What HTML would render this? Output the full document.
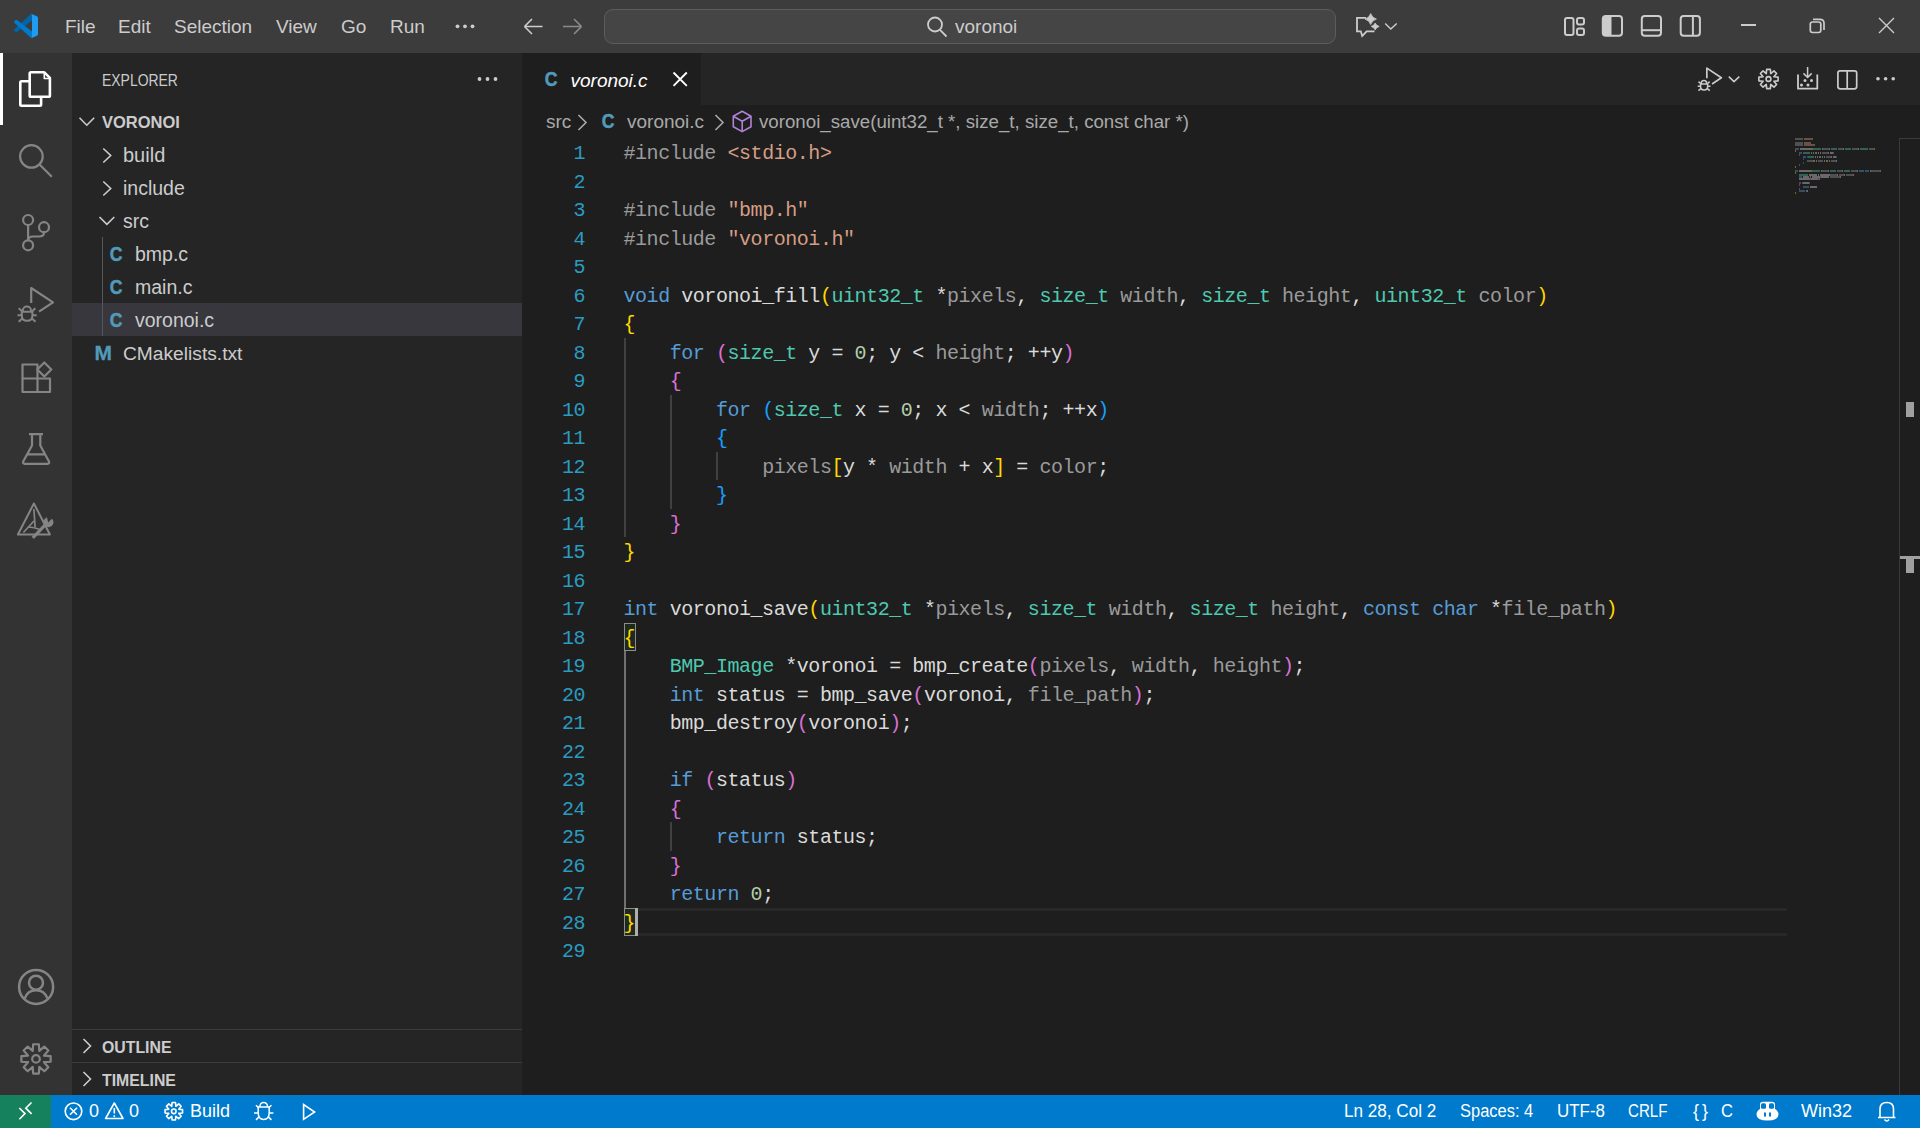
<!DOCTYPE html>
<html><head><meta charset="utf-8">
<style>
*{margin:0;padding:0;box-sizing:border-box}
html,body{width:1920px;height:1128px;overflow:hidden}
body{background:#1e1e1e;font-family:"Liberation Sans",sans-serif;position:relative;color:#cccccc}
.a{position:absolute}
svg{display:block}
/* title bar */
#title{left:0;top:0;width:1920px;height:53px;background:#3c3c3c}
.menu{top:0;height:53.5px;line-height:53.5px;font-size:19px;color:#cccccc;white-space:nowrap}
#search{left:604px;top:9px;width:732px;height:35px;background:#454545;border:1px solid #5d5d5d;border-radius:9px}
/* activity bar */
#act{left:0;top:53px;width:72px;height:1042px;background:#333333}
/* sidebar */
#side{left:72px;top:53px;width:450px;height:1042px;background:#252526}
.tr{height:33px;line-height:33px;font-size:19.5px;color:#cccccc;white-space:nowrap}
/* tabs */
#tabs{left:522px;top:53px;width:1398px;height:52px;background:#252526}
#tab{left:522px;top:53px;width:179px;height:52px;background:#1e1e1e}
/* code */
.cl{position:absolute;left:623.5px;height:28.5px;line-height:28.5px;font-family:"Liberation Mono",monospace;font-size:20px;letter-spacing:-0.45px;white-space:pre;color:#dadada}
.ln{position:absolute;left:540px;width:45px;text-align:right;height:28.5px;line-height:28.5px;font-family:"Liberation Mono",monospace;font-size:20px;letter-spacing:-0.45px;color:#2b9bc0}
.k{color:#569cd6}.t{color:#4ec9b0}.p{color:#9a9a9a}.s{color:#d69d85}.pp{color:#9b9b9b}.n{color:#b5cea8}.w{color:#dadada}
.b1{color:#ffd700}.b2{color:#da70d6}.b3{color:#179fff}
/* status */
#status{left:0;top:1095px;width:1920px;height:33px;background:#007acc}
#remote{left:0;top:1095px;width:51px;height:33px;background:#16825d}
.st{top:1095px;height:33px;line-height:33px;font-size:18px;color:#ffffff;white-space:nowrap}
.ci{height:33px;line-height:33px;font-size:20px;font-weight:bold;color:#519aba;-webkit-text-stroke:0.5px #519aba;transform:scaleX(0.88);transform-origin:50% 0}
</style></head><body>
<div id="title" class="a"></div>
<div id="act" class="a"></div>
<div id="side" class="a"></div>
<div id="tabs" class="a"></div>
<div id="tab" class="a"></div>
<div id="status" class="a"></div>
<div id="remote" class="a"></div>

<!-- TITLE -->
<div class="a menu" style="left:65px">File</div>
<div class="a menu" style="left:118px">Edit</div>
<div class="a menu" style="left:174px">Selection</div>
<div class="a menu" style="left:276px">View</div>
<div class="a menu" style="left:341px">Go</div>
<div class="a menu" style="left:390px">Run</div>
<div id="search" class="a"></div>
<div class="a menu" style="left:955px;font-size:19px">voronoi</div>


<!-- LOGO -->
<svg class="a" style="left:14px;top:14px" width="24" height="24" viewBox="0 0 100 100">
<path d="M96.46 10.8L75.86.88C73.47-.27 70.62.21 68.75 2.08L1.3 63.58c-1.82 1.66-1.81 4.51 0 6.16l5.51 5.01c1.49 1.35 3.72 1.45 5.32.24L93.36 13.37C96.09 11.3 100 13.25 100 16.67v-.24c0-2.4-1.38-4.59-3.54-5.63z" fill="#0065A9"/>
<path d="M96.46 89.2L75.86 99.12c-2.39 1.15-5.24.66-7.11-1.21L1.3 36.42c-1.82-1.66-1.81-4.51 0-6.16l5.51-5.01c1.49-1.35 3.72-1.45 5.32-.24l81.23 61.62c2.73 2.07 6.64.12 6.64-3.3v.24c0 2.4-1.38 4.59-3.54 5.63z" fill="#007ACC"/>
<path d="M75.86 99.13c-2.39 1.15-5.24.66-7.11-1.21 2.31 2.31 6.25.67 6.25-2.59V4.67c0-3.26-3.94-4.9-6.25-2.59 1.87-1.87 4.72-2.36 7.11-1.21l20.6 9.91c2.16 1.04 3.54 3.23 3.54 5.63v67.17c0 2.4-1.38 4.59-3.54 5.63l-20.6 9.92z" fill="#1F9CF0"/>
</svg>
<!-- menu more -->
<svg class="a" style="left:450px;top:16px" width="30" height="20"><g fill="#cccccc"><circle cx="7.5" cy="10.3" r="1.9"/><circle cx="15" cy="10.3" r="1.9"/><circle cx="22.5" cy="10.3" r="1.9"/></g></svg>
<!-- nav arrows -->
<svg class="a" style="left:518px;top:12px" width="70" height="30" fill="none" stroke-width="1.6">
<path d="M6.5 14.5H24.5M6.5 14.5L14 7M6.5 14.5L14 22" stroke="#cccccc"/>
<path d="M45 14.5H63.5M63.5 14.5L56 7M63.5 14.5L56 22" stroke="#8b8b8b"/>
</svg>
<!-- search icon -->
<svg class="a" style="left:924px;top:14px" width="26" height="26" fill="none" stroke="#cccccc" stroke-width="1.8">
<circle cx="11" cy="10.5" r="7"/><path d="M16 15.8L22.5 22.5"/>
</svg>
<!-- copilot chat icon -->
<svg class="a" style="left:1352px;top:10px" width="50" height="30" fill="none" stroke="#cccccc" stroke-width="1.8" stroke-linejoin="miter">
<path d="M14 7.8H5V21.3H8.8L10.2 26L14.6 21.3H22.5"/>
<path d="M18.7 3.6Q20 7.8 24.4 9.1Q20 10.4 18.7 14.6Q17.4 10.4 13 9.1Q17.4 7.8 18.7 3.6Z" fill="#cccccc" stroke="#cccccc" stroke-width="0.8"/>
<path d="M23.2 13Q24.1 15.6 27.2 16.5Q24.1 17.4 23.2 20Q22.3 17.4 19.2 16.5Q22.3 15.6 23.2 13Z" fill="#cccccc" stroke="#cccccc" stroke-width="0.8"/>
<path d="M33.2 13.6L38.8 19.1L44.7 13.6" stroke-width="1.4"/>
</svg>
<!-- layout icons -->
<svg class="a" style="left:1560px;top:12px" width="150" height="30" fill="none" stroke="#cccccc" stroke-width="2">
<rect x="5" y="6" width="8.5" height="17" rx="2"/>
<rect x="17" y="6" width="7" height="6.5" rx="2"/>
<rect x="17" y="16.5" width="7" height="6.5" rx="2"/>
<rect x="42.8" y="4" width="19.2" height="19.8" rx="3"/>
<path d="M42.8 7V21Q42.8 23.8 45.8 23.8H51.5V4H45.8Q42.8 4 42.8 7Z" fill="#cccccc" stroke="none"/>
<rect x="81.8" y="4" width="19.2" height="19.8" rx="3"/>
<path d="M81.8 18.2H101"/>
<rect x="120.7" y="4" width="19.2" height="19.8" rx="3"/>
<path d="M132.9 4V23.8"/>
</svg>
<!-- window controls -->
<svg class="a" style="left:1735px;top:12px" width="170" height="30" fill="none" stroke="#cccccc">
<path d="M6 13H21" stroke-width="2"/>
<rect x="75.3" y="10" width="10.5" height="10.5" rx="2.2" stroke-width="1.7"/>
<path d="M78 7.3H85Q89 7.3 89 11.3V18" stroke-width="1.7"/>
<path d="M144 6L159 21M159 6L144 21" stroke-width="1.4"/>
</svg>

<!-- ACTIVITY BAR -->
<div class="a" style="left:0;top:53px;width:3px;height:72px;background:#ffffff"></div>
<svg class="a" style="left:0;top:53px" width="72" height="520" fill="none" stroke="#858585" stroke-width="2.2" stroke-linejoin="round">
<!-- explorer: coords relative top 53 -->
<g stroke="#ffffff" stroke-width="2.6">
<path d="M29.7 20.5Q29.7 19.3 31 19.3H44.3L49.9 24.9V42.5Q49.9 43.8 48.6 43.8H31Q29.7 43.8 29.7 42.5Z"/>
<path d="M29.7 28.3H21.5Q20.3 28.3 20.3 29.5V51.5Q20.3 52.7 21.5 52.7H39.9Q41.1 52.7 41.1 51.5V43.8"/>
<path d="M44.3 19.8V25.5H49.9" stroke-width="1.6"/>
</g>
<!-- search -->
<circle cx="31.4" cy="103.4" r="11.3" stroke-width="2.2"/>
<path d="M39.5 111.5L51.8 123.8"/>
<!-- source control -->
<circle cx="28.1" cy="167" r="5"/>
<circle cx="28.1" cy="192.3" r="5"/>
<circle cx="44" cy="174.2" r="5"/>
<path d="M28.1 172V187.3"/>
<path d="M44 179.2Q44 183.5 39 183.5H33Q28.1 183.5 28.1 188"/>
<!-- run debug -->
<path d="M31.2 250V235L53 249.3L39 258.7"/>
<g stroke-width="2">
<path d="M22.8 258.7V257.5A4.1 4.1 0 0 1 31 257.5V258.7"/>
<path d="M21.8 258.7H32.4V262.5Q32.4 267.8 27.1 267.8Q21.8 267.8 21.8 262.5Z"/>
<path d="M18.7 255.2L21.8 258M35.4 255.2L32.4 258M17.5 262.2H21.8M36.7 262.2H32.4M18.7 268.8L22.3 265.5M35.5 268.8L31.9 265.5"/>
</g>
<!-- extensions -->
<path d="M22.5 311.5H37.5V339H22.5ZM22.5 325.5H50V339H37.5M37.5 325.5"/>
<path d="M44.3 309.5L51.3 316.5L44.3 323.5L37.3 316.5Z"/>
<!-- testing flask -->
<path d="M29 381.2H43M32 381.2V392.5L23.2 408.5Q22.5 410.8 24.8 410.8H47.5Q49.8 410.8 49 408.5L40.3 392.5V381.2M27 401.3H45.3"/>
<!-- cmake -->
<g stroke-width="2">
<path d="M33.9 450.5L17.9 481.5H49.9Z"/>
<path d="M33.9 456L35.1 474M23.4 479.5L33.9 468M28.8 474Q34 474.5 39.4 476.3" stroke-width="1.7"/>
</g>
<path d="M32.8 484.8L45.5 471.5" stroke-width="3.2" stroke="#858585"/>
<circle cx="48.4" cy="469.2" r="5" fill="#858585" stroke="none"/>
<path d="M48.2 469.4L51.6 466L55 462.6L50.5 461L47 464.5Z" fill="#333333" stroke="none"/>
</svg>
<svg class="a" style="left:0;top:960px" width="72" height="130" fill="none" stroke="#858585" stroke-width="2.2">
<!-- account -->
<circle cx="36.1" cy="26.9" r="17" stroke-width="2.5"/>
<circle cx="36" cy="22.7" r="7" stroke-width="2.5"/>
<path d="M24.8 38.4Q27.5 30.2 36 30.2Q44.5 30.2 47.4 38.4" stroke-width="2.5"/>
<!-- gear -->
<path d="M33.16 84.27L38.84 84.27L39.29 90.95L44.33 86.55L48.35 90.57L43.95 95.61L50.63 96.06L50.63 101.74L43.95 102.19L48.35 107.23L44.33 111.25L39.29 106.85L38.84 113.53L33.16 113.53L32.71 106.85L27.67 111.25L23.65 107.23L28.05 102.19L21.37 101.74L21.37 96.06L28.05 95.61L23.65 90.57L27.67 86.55L32.71 90.95Z" stroke-linejoin="round"/><circle cx="36" cy="98.9" r="3.8"/>
</svg>

<!-- SIDEBAR ICONS -->
<svg class="a" style="left:470px;top:69px" width="35" height="20"><g fill="#cccccc"><circle cx="9.5" cy="10" r="1.9"/><circle cx="17.5" cy="10" r="1.9"/><circle cx="25.5" cy="10" r="1.9"/></g></svg>
<svg class="a" style="left:72px;top:105px" width="60" height="280" fill="none" stroke="#cccccc" stroke-width="1.6">
<path d="M7.5 12.8L14.8 20.2L22.2 12.8"/>
<path d="M31.3 43.5L38.7 50.5L31.3 57.5"/>
<path d="M31.3 76.5L38.7 83.5L31.3 90.5"/>
<path d="M27.5 112L34.9 119.3L42.3 112"/>

</svg>
<div class="a" style="left:72px;top:1029px;width:450px;height:66px"></div>
<svg class="a" style="left:72px;top:1030px" width="40" height="66" fill="none" stroke="#cccccc" stroke-width="1.6">
<path d="M11.5 9L18.5 16L11.5 23"/>
<path d="M11.5 42L18.5 49L11.5 56"/>
</svg>

<!-- SIDEBAR -->
<div class="a tr" style="left:102px;top:64px;height:33px;font-size:16.5px;transform:scaleX(0.845);transform-origin:0 0">EXPLORER</div>
<div class="a tr" style="left:102px;top:106px;font-weight:bold;font-size:16.5px">VORONOI</div>
<div class="a tr" style="left:123px;top:139px;font-size:20px">build</div>
<div class="a tr" style="left:123px;top:172px">include</div>
<div class="a tr" style="left:123px;top:205px">src</div>
<div class="a" style="left:72px;top:303px;width:450px;height:33px;background:#37373d"></div>
<div class="a" style="left:102px;top:237px;width:1px;height:99px;background:#585858"></div>
<div class="a tr" style="left:135px;top:238px">bmp.c</div>
<div class="a tr" style="left:135px;top:271px">main.c</div>
<div class="a tr" style="left:135px;top:304px">voronoi.c</div>
<div class="a tr" style="left:123px;top:337px;font-size:19.2px">CMakelists.txt</div>
<div class="a" style="left:72px;top:1029px;width:450px;height:1px;background:#3c3c3c"></div>
<div class="a" style="left:72px;top:1062px;width:450px;height:1px;background:#3c3c3c"></div>
<div class="a tr" style="left:102px;top:1031px;font-weight:bold;font-size:16.5px;transform:scaleX(0.96);transform-origin:0 0">OUTLINE</div>
<div class="a tr" style="left:102px;top:1064px;font-weight:bold;font-size:16.5px;transform:scaleX(0.96);transform-origin:0 0">TIMELINE</div>

<!-- TAB + BREADCRUMB -->
<div class="a tr" style="left:570.5px;top:63.5px;font-style:italic;color:#ffffff;font-size:19px">voronoi.c</div>
<div class="a tr" style="left:546px;top:105px;color:#a9a9a9;font-size:19px">src</div>
<div class="a tr" style="left:627px;top:105px;color:#a9a9a9;font-size:19px">voronoi.c</div>
<div class="a tr" style="left:759px;top:105px;color:#a9a9a9;font-size:18.7px">voronoi_save(uint32_t *, size_t, size_t, const char *)</div>


<!-- FILE ICONS -->
<div class="a ci" style="left:109px;top:238px">C</div>
<div class="a ci" style="left:109px;top:271px">C</div>
<div class="a ci" style="left:109px;top:304px">C</div>
<div class="a ci" style="left:94.5px;top:336px;font-size:21px;transform:none;-webkit-text-stroke:0.3px #519aba">M</div>
<div class="a ci" style="left:544px;top:63px">C</div>
<div class="a ci" style="left:601px;top:105px">C</div>
<!-- tab close -->
<svg class="a" style="left:670px;top:69px" width="20" height="20" stroke="#ffffff" stroke-width="1.9"><path d="M3.5 3.5L16.8 16.8M16.8 3.5L3.5 16.8"/></svg>
<!-- breadcrumb chevrons & cube -->
<svg class="a" style="left:570px;top:108px" width="200" height="28" fill="none" stroke="#a9a9a9" stroke-width="1.6">
<path d="M8.5 7L16 14.5L8.5 22"/>
<path d="M145.5 7L153 14.5L145.5 22"/>
<g stroke="#b180d7" stroke-width="1.6" stroke-linejoin="round">
<path d="M163.3 8.3L172.2 3.3L181 8.3V18.7L172.2 23.6L163.3 18.7Z"/>
<path d="M163.3 8.3L172.2 13.3L181 8.3M172.2 13.3V23.6"/>
</g>
</svg>
<!-- editor actions -->
<svg class="a" style="left:1690px;top:58px" width="220" height="40" fill="none" stroke="#cccccc" stroke-width="1.7" stroke-linejoin="round">
<g transform="translate(-3.97 -146.6) scale(0.667)" stroke-width="2.5">
<path d="M31.2 250V235L53 249.3L39 258.7"/>
<g stroke-width="2.3">
<path d="M22.8 258.7V257.5A4.1 4.1 0 0 1 31 257.5V258.7"/>
<path d="M21.8 258.7H32.4V262.5Q32.4 267.8 27.1 267.8Q21.8 267.8 21.8 262.5Z"/>
<path d="M18.7 255.2L21.8 258M35.4 255.2L32.4 258M17.5 262.2H21.8M36.7 262.2H32.4M18.7 268.8L22.3 265.5M35.5 268.8L31.9 265.5"/>
</g></g>
<path d="M38.8 18.6L44 23.6L49.3 18.6" stroke-width="1.5"/>
<g stroke-width="1.6" stroke-linejoin="round"><path d="M76.63 11.38L80.37 11.38L80.72 15.64L83.98 12.88L86.62 15.52L83.86 18.78L88.12 19.13L88.12 22.87L83.86 23.22L86.62 26.48L83.98 29.12L80.72 26.36L80.37 30.62L76.63 30.62L76.28 26.36L73.02 29.12L70.38 26.48L73.14 23.22L68.88 22.87L68.88 19.13L73.14 18.78L70.38 15.52L73.02 12.88L76.28 15.64Z"/><circle cx="78.5" cy="21" r="2.4"/></g>
<path d="M108 16.5V30.7H127.3V16.5" stroke-width="1.8"/>
<path d="M117.6 9V19.5M113.5 15.4L117.6 19.5L121.7 15.4" stroke-width="1.5"/>
<g fill="#cccccc" stroke="none"><circle cx="115" cy="22.5" r="1.5"/><circle cx="121.5" cy="22.5" r="1.5"/><circle cx="111.5" cy="27" r="1.5"/><circle cx="118" cy="27" r="1.5"/></g>
<rect x="147.9" y="12.9" width="18.8" height="18" rx="2.3" stroke-width="1.7"/>
<path d="M157.2 12.9V30.9"/>
<g fill="#cccccc" stroke="none"><circle cx="188" cy="20.8" r="1.8"/><circle cx="195.6" cy="20.8" r="1.8"/><circle cx="203.2" cy="20.8" r="1.8"/></g>
</svg>

<!-- EDITOR DECORATIONS -->
<div class="a" style="left:624px;top:337.5px;width:1.5px;height:199.5px;background:#404040"></div>
<div class="a" style="left:670px;top:394.5px;width:1.5px;height:114px;background:#404040"></div>
<div class="a" style="left:716px;top:451.5px;width:1.5px;height:28.5px;background:#404040"></div>
<div class="a" style="left:624px;top:651px;width:2px;height:257px;background:#707070"></div>
<div class="a" style="left:670px;top:822px;width:1.5px;height:28.5px;background:#404040"></div>
<!-- current line -->
<div class="a" style="left:624px;top:908px;width:1163px;height:28px;border-style:solid;border-color:#282828;border-width:3px 0"></div>
<!-- bracket match -->
<div class="a" style="left:624px;top:623px;width:11.5px;height:28px;border:1px solid #8c8c8c;background:#1d2a1d"></div>
<div class="a" style="left:624px;top:908px;width:11.5px;height:28px;border:1px solid #8c8c8c;background:#1d2a1d"></div>
<div class="a" style="left:635px;top:908px;width:3px;height:28px;background:#aeafad"></div>
<!-- overview ruler -->
<div class="a" style="left:1899px;top:138px;width:21px;height:957px;border-left:1px solid #3a3a3a;border-top:1px solid #3a3a3a"></div>
<div class="a" style="left:1906px;top:402px;width:8px;height:15px;background:#a0a0a0"></div>
<div class="a" style="left:1906px;top:557px;width:8px;height:16px;background:#a0a0a0"></div>
<div class="a" style="left:1900px;top:556px;width:20px;height:3px;background:#a0a0a0"></div>

<!-- CODE -->
<div class="cl" style="top:140.00px"><span class="pp">#include</span><span class="w"> </span><span class="s">&lt;stdio.h&gt;</span></div>
<div class="ln" style="top:140.00px">1</div>
<div class="cl" style="top:168.50px"></div>
<div class="ln" style="top:168.50px">2</div>
<div class="cl" style="top:197.00px"><span class="pp">#include</span><span class="w"> </span><span class="s">"bmp.h"</span></div>
<div class="ln" style="top:197.00px">3</div>
<div class="cl" style="top:225.50px"><span class="pp">#include</span><span class="w"> </span><span class="s">"voronoi.h"</span></div>
<div class="ln" style="top:225.50px">4</div>
<div class="cl" style="top:254.00px"></div>
<div class="ln" style="top:254.00px">5</div>
<div class="cl" style="top:282.50px"><span class="k">void</span><span class="w"> voronoi_fill</span><span class="b1">(</span><span class="t">uint32_t</span><span class="w"> *</span><span class="p">pixels</span><span class="w">, </span><span class="t">size_t</span><span class="w"> </span><span class="p">width</span><span class="w">, </span><span class="t">size_t</span><span class="w"> </span><span class="p">height</span><span class="w">, </span><span class="t">uint32_t</span><span class="w"> </span><span class="p">color</span><span class="b1">)</span></div>
<div class="ln" style="top:282.50px">6</div>
<div class="cl" style="top:311.00px"><span class="b1">{</span></div>
<div class="ln" style="top:311.00px">7</div>
<div class="cl" style="top:339.50px"><span class="w">    </span><span class="k">for</span><span class="w"> </span><span class="b2">(</span><span class="t">size_t</span><span class="w"> y = </span><span class="n">0</span><span class="w">; y &lt; </span><span class="p">height</span><span class="w">; ++y</span><span class="b2">)</span></div>
<div class="ln" style="top:339.50px">8</div>
<div class="cl" style="top:368.00px"><span class="w">    </span><span class="b2">{</span></div>
<div class="ln" style="top:368.00px">9</div>
<div class="cl" style="top:396.50px"><span class="w">        </span><span class="k">for</span><span class="w"> </span><span class="b3">(</span><span class="t">size_t</span><span class="w"> x = </span><span class="n">0</span><span class="w">; x &lt; </span><span class="p">width</span><span class="w">; ++x</span><span class="b3">)</span></div>
<div class="ln" style="top:396.50px">10</div>
<div class="cl" style="top:425.00px"><span class="w">        </span><span class="b3">{</span></div>
<div class="ln" style="top:425.00px">11</div>
<div class="cl" style="top:453.50px"><span class="w">            </span><span class="p">pixels</span><span class="b1">[</span><span class="w">y * </span><span class="p">width</span><span class="w"> + x</span><span class="b1">]</span><span class="w"> = </span><span class="p">color</span><span class="w">;</span></div>
<div class="ln" style="top:453.50px">12</div>
<div class="cl" style="top:482.00px"><span class="w">        </span><span class="b3">}</span></div>
<div class="ln" style="top:482.00px">13</div>
<div class="cl" style="top:510.50px"><span class="w">    </span><span class="b2">}</span></div>
<div class="ln" style="top:510.50px">14</div>
<div class="cl" style="top:539.00px"><span class="b1">}</span></div>
<div class="ln" style="top:539.00px">15</div>
<div class="cl" style="top:567.50px"></div>
<div class="ln" style="top:567.50px">16</div>
<div class="cl" style="top:596.00px"><span class="k">int</span><span class="w"> voronoi_save</span><span class="b1">(</span><span class="t">uint32_t</span><span class="w"> *</span><span class="p">pixels</span><span class="w">, </span><span class="t">size_t</span><span class="w"> </span><span class="p">width</span><span class="w">, </span><span class="t">size_t</span><span class="w"> </span><span class="p">height</span><span class="w">, </span><span class="k">const</span><span class="w"> </span><span class="k">char</span><span class="w"> *</span><span class="p">file_path</span><span class="b1">)</span></div>
<div class="ln" style="top:596.00px">17</div>
<div class="cl" style="top:624.50px"><span class="b1">{</span></div>
<div class="ln" style="top:624.50px">18</div>
<div class="cl" style="top:653.00px"><span class="w">    </span><span class="t">BMP_Image</span><span class="w"> *voronoi = bmp_create</span><span class="b2">(</span><span class="p">pixels</span><span class="w">, </span><span class="p">width</span><span class="w">, </span><span class="p">height</span><span class="b2">)</span><span class="w">;</span></div>
<div class="ln" style="top:653.00px">19</div>
<div class="cl" style="top:681.50px"><span class="w">    </span><span class="k">int</span><span class="w"> status = bmp_save</span><span class="b2">(</span><span class="w">voronoi, </span><span class="p">file_path</span><span class="b2">)</span><span class="w">;</span></div>
<div class="ln" style="top:681.50px">20</div>
<div class="cl" style="top:710.00px"><span class="w">    bmp_destroy</span><span class="b2">(</span><span class="w">voronoi</span><span class="b2">)</span><span class="w">;</span></div>
<div class="ln" style="top:710.00px">21</div>
<div class="cl" style="top:738.50px"></div>
<div class="ln" style="top:738.50px">22</div>
<div class="cl" style="top:767.00px"><span class="w">    </span><span class="k">if</span><span class="w"> </span><span class="b2">(</span><span class="w">status</span><span class="b2">)</span></div>
<div class="ln" style="top:767.00px">23</div>
<div class="cl" style="top:795.50px"><span class="w">    </span><span class="b2">{</span></div>
<div class="ln" style="top:795.50px">24</div>
<div class="cl" style="top:824.00px"><span class="w">        </span><span class="k">return</span><span class="w"> status;</span></div>
<div class="ln" style="top:824.00px">25</div>
<div class="cl" style="top:852.50px"><span class="w">    </span><span class="b2">}</span></div>
<div class="ln" style="top:852.50px">26</div>
<div class="cl" style="top:881.00px"><span class="w">    </span><span class="k">return</span><span class="w"> </span><span class="n">0</span><span class="w">;</span></div>
<div class="ln" style="top:881.00px">27</div>
<div class="cl" style="top:909.50px"><span class="b1">}</span></div>
<div class="ln" style="top:909.50px">28</div>
<div class="cl" style="top:938.00px"></div>
<div class="ln" style="top:938.00px">29</div>
<svg class="a" style="left:1795px;top:138px" width="100" height="60" opacity="0.4"><rect x="0" y="0" width="8" height="2" fill="#9b9b9b"/><rect x="9" y="0" width="9" height="2" fill="#d69d85"/><rect x="0" y="4" width="8" height="2" fill="#9b9b9b"/><rect x="9" y="4" width="7" height="2" fill="#d69d85"/><rect x="0" y="6" width="8" height="2" fill="#9b9b9b"/><rect x="9" y="6" width="11" height="2" fill="#d69d85"/><rect x="0" y="10" width="4" height="2" fill="#569cd6"/><rect x="5" y="10" width="12" height="2" fill="#dadada"/><rect x="17" y="10" width="1" height="2" fill="#ffd700"/><rect x="18" y="10" width="8" height="2" fill="#4ec9b0"/><rect x="27" y="10" width="1" height="2" fill="#dadada"/><rect x="28" y="10" width="6" height="2" fill="#9a9a9a"/><rect x="34" y="10" width="1" height="2" fill="#dadada"/><rect x="36" y="10" width="6" height="2" fill="#4ec9b0"/><rect x="43" y="10" width="5" height="2" fill="#9a9a9a"/><rect x="48" y="10" width="1" height="2" fill="#dadada"/><rect x="50" y="10" width="6" height="2" fill="#4ec9b0"/><rect x="57" y="10" width="6" height="2" fill="#9a9a9a"/><rect x="63" y="10" width="1" height="2" fill="#dadada"/><rect x="65" y="10" width="8" height="2" fill="#4ec9b0"/><rect x="74" y="10" width="5" height="2" fill="#9a9a9a"/><rect x="79" y="10" width="1" height="2" fill="#ffd700"/><rect x="0" y="12" width="1" height="2" fill="#ffd700"/><rect x="4" y="14" width="3" height="2" fill="#569cd6"/><rect x="8" y="14" width="1" height="2" fill="#da70d6"/><rect x="9" y="14" width="6" height="2" fill="#4ec9b0"/><rect x="16" y="14" width="1" height="2" fill="#dadada"/><rect x="18" y="14" width="1" height="2" fill="#dadada"/><rect x="20" y="14" width="1" height="2" fill="#b5cea8"/><rect x="21" y="14" width="1" height="2" fill="#dadada"/><rect x="23" y="14" width="1" height="2" fill="#dadada"/><rect x="25" y="14" width="1" height="2" fill="#dadada"/><rect x="27" y="14" width="6" height="2" fill="#9a9a9a"/><rect x="33" y="14" width="1" height="2" fill="#dadada"/><rect x="35" y="14" width="3" height="2" fill="#dadada"/><rect x="38" y="14" width="1" height="2" fill="#da70d6"/><rect x="4" y="16" width="1" height="2" fill="#da70d6"/><rect x="8" y="18" width="3" height="2" fill="#569cd6"/><rect x="12" y="18" width="1" height="2" fill="#179fff"/><rect x="13" y="18" width="6" height="2" fill="#4ec9b0"/><rect x="20" y="18" width="1" height="2" fill="#dadada"/><rect x="22" y="18" width="1" height="2" fill="#dadada"/><rect x="24" y="18" width="1" height="2" fill="#b5cea8"/><rect x="25" y="18" width="1" height="2" fill="#dadada"/><rect x="27" y="18" width="1" height="2" fill="#dadada"/><rect x="29" y="18" width="1" height="2" fill="#dadada"/><rect x="31" y="18" width="5" height="2" fill="#9a9a9a"/><rect x="36" y="18" width="1" height="2" fill="#dadada"/><rect x="38" y="18" width="3" height="2" fill="#dadada"/><rect x="41" y="18" width="1" height="2" fill="#179fff"/><rect x="8" y="20" width="1" height="2" fill="#179fff"/><rect x="12" y="22" width="6" height="2" fill="#9a9a9a"/><rect x="18" y="22" width="1" height="2" fill="#ffd700"/><rect x="19" y="22" width="1" height="2" fill="#dadada"/><rect x="21" y="22" width="1" height="2" fill="#dadada"/><rect x="23" y="22" width="5" height="2" fill="#9a9a9a"/><rect x="29" y="22" width="1" height="2" fill="#dadada"/><rect x="31" y="22" width="1" height="2" fill="#dadada"/><rect x="32" y="22" width="1" height="2" fill="#ffd700"/><rect x="34" y="22" width="1" height="2" fill="#dadada"/><rect x="36" y="22" width="5" height="2" fill="#9a9a9a"/><rect x="41" y="22" width="1" height="2" fill="#dadada"/><rect x="8" y="24" width="1" height="2" fill="#179fff"/><rect x="4" y="26" width="1" height="2" fill="#da70d6"/><rect x="0" y="28" width="1" height="2" fill="#ffd700"/><rect x="0" y="32" width="3" height="2" fill="#569cd6"/><rect x="4" y="32" width="12" height="2" fill="#dadada"/><rect x="16" y="32" width="1" height="2" fill="#ffd700"/><rect x="17" y="32" width="8" height="2" fill="#4ec9b0"/><rect x="26" y="32" width="1" height="2" fill="#dadada"/><rect x="27" y="32" width="6" height="2" fill="#9a9a9a"/><rect x="33" y="32" width="1" height="2" fill="#dadada"/><rect x="35" y="32" width="6" height="2" fill="#4ec9b0"/><rect x="42" y="32" width="5" height="2" fill="#9a9a9a"/><rect x="47" y="32" width="1" height="2" fill="#dadada"/><rect x="49" y="32" width="6" height="2" fill="#4ec9b0"/><rect x="56" y="32" width="6" height="2" fill="#9a9a9a"/><rect x="62" y="32" width="1" height="2" fill="#dadada"/><rect x="64" y="32" width="5" height="2" fill="#569cd6"/><rect x="70" y="32" width="4" height="2" fill="#569cd6"/><rect x="75" y="32" width="1" height="2" fill="#dadada"/><rect x="76" y="32" width="9" height="2" fill="#9a9a9a"/><rect x="85" y="32" width="1" height="2" fill="#ffd700"/><rect x="0" y="34" width="1" height="2" fill="#ffd700"/><rect x="4" y="36" width="9" height="2" fill="#4ec9b0"/><rect x="14" y="36" width="8" height="2" fill="#dadada"/><rect x="23" y="36" width="1" height="2" fill="#dadada"/><rect x="25" y="36" width="10" height="2" fill="#dadada"/><rect x="35" y="36" width="1" height="2" fill="#da70d6"/><rect x="36" y="36" width="6" height="2" fill="#9a9a9a"/><rect x="42" y="36" width="1" height="2" fill="#dadada"/><rect x="44" y="36" width="5" height="2" fill="#9a9a9a"/><rect x="49" y="36" width="1" height="2" fill="#dadada"/><rect x="51" y="36" width="6" height="2" fill="#9a9a9a"/><rect x="57" y="36" width="1" height="2" fill="#da70d6"/><rect x="58" y="36" width="1" height="2" fill="#dadada"/><rect x="4" y="38" width="3" height="2" fill="#569cd6"/><rect x="8" y="38" width="6" height="2" fill="#dadada"/><rect x="15" y="38" width="1" height="2" fill="#dadada"/><rect x="17" y="38" width="8" height="2" fill="#dadada"/><rect x="25" y="38" width="1" height="2" fill="#da70d6"/><rect x="26" y="38" width="8" height="2" fill="#dadada"/><rect x="35" y="38" width="9" height="2" fill="#9a9a9a"/><rect x="44" y="38" width="1" height="2" fill="#da70d6"/><rect x="45" y="38" width="1" height="2" fill="#dadada"/><rect x="4" y="40" width="11" height="2" fill="#dadada"/><rect x="15" y="40" width="1" height="2" fill="#da70d6"/><rect x="16" y="40" width="7" height="2" fill="#dadada"/><rect x="23" y="40" width="1" height="2" fill="#da70d6"/><rect x="24" y="40" width="1" height="2" fill="#dadada"/><rect x="4" y="44" width="2" height="2" fill="#569cd6"/><rect x="7" y="44" width="1" height="2" fill="#da70d6"/><rect x="8" y="44" width="6" height="2" fill="#dadada"/><rect x="14" y="44" width="1" height="2" fill="#da70d6"/><rect x="4" y="46" width="1" height="2" fill="#da70d6"/><rect x="8" y="48" width="6" height="2" fill="#569cd6"/><rect x="15" y="48" width="7" height="2" fill="#dadada"/><rect x="4" y="50" width="1" height="2" fill="#da70d6"/><rect x="4" y="52" width="6" height="2" fill="#569cd6"/><rect x="11" y="52" width="1" height="2" fill="#b5cea8"/><rect x="12" y="52" width="1" height="2" fill="#dadada"/><rect x="0" y="54" width="1" height="2" fill="#ffd700"/></svg>


<!-- STATUS ICONS -->
<svg class="a" style="left:0;top:1095px" width="330" height="33" fill="none" stroke="#ffffff" stroke-width="1.6">
<path d="M31.5 7.5L25.8 13.2L31.6 18.8M19.3 13L25 18.6L19.4 24.3" stroke-width="1.6"/>
<circle cx="73.5" cy="16.3" r="8.3"/>
<path d="M70 12.8L77 19.8M77 12.8L70 19.8"/>
<path d="M114.3 8L123 23.5H105.6Z" stroke-linejoin="round"/>
<path d="M114.3 13V18.5M114.3 20.3V22"/>
<g stroke-linejoin="round"><path d="M172.10 7.56L175.50 7.56L175.87 11.31L178.78 8.92L181.18 11.32L178.79 14.23L182.54 14.60L182.54 18.00L178.79 18.37L181.18 21.28L178.78 23.68L175.87 21.29L175.50 25.04L172.10 25.04L171.73 21.29L168.82 23.68L166.42 21.28L168.81 18.37L165.06 18.00L165.06 14.60L168.81 14.23L166.42 11.32L168.82 8.92L171.73 11.31Z"/><circle cx="173.8" cy="16.3" r="2.3"/></g>
<g stroke-width="1.5">
<path d="M259.95 12V11.2A3.75 3.75 0 0 1 267.45 11.2V12"/>
<path d="M258.2 12H269.2V17.5Q269.2 24.5 263.7 24.5Q258.2 24.5 258.2 17.5Z"/>
<path d="M255.9 10.2L258.6 12.6M271.5 10.2L268.8 12.6M254 17.9H258.2M273.4 17.9H269.2M256 24.9L259.3 21.6M271.4 24.9L268.1 21.6"/>
</g>
<path d="M303.6 9.6V24.3L314.6 17Z" stroke-linejoin="miter"/>
</svg>
<svg class="a" style="left:1740px;top:1095px" width="180" height="33" fill="none" stroke="#ffffff" stroke-width="1.6">
<path d="M20 9.5Q20 6.8 23 6.8H32Q35 6.8 35 9.5V14Q38.5 16 38.5 19.5Q38.5 25.5 27.5 25.5Q16.5 25.5 16.5 19.5Q16.5 16 20 14Z" fill="#ffffff" stroke="none"/>
<rect x="21" y="8.3" width="5" height="5.5" rx="1.5" fill="#007acc" stroke="none"/>
<rect x="29" y="8.3" width="5" height="5.5" rx="1.5" fill="#007acc" stroke="none"/>
<rect x="24" y="17.5" width="2" height="4" fill="#007acc" stroke="none"/>
<rect x="29" y="17.5" width="2" height="4" fill="#007acc" stroke="none"/>
<path d="M140 22.5V14Q140 7.5 146.8 7.5Q153.5 7.5 153.5 14V22.5H155.5H138M144.5 24.5Q146.8 27.5 149 24.5"/>
</svg>
<div class="a st" style="left:1693px;letter-spacing:3px">{}</div>

<!-- STATUS -->
<div class="a st" style="left:89px">0</div>
<div class="a st" style="left:129px">0</div>
<div class="a st" style="left:190px">Build</div>
<div class="a st" style="left:1344px;transform:scaleX(0.95);transform-origin:0 0">Ln 28, Col 2</div>
<div class="a st" style="left:1460px;transform:scaleX(0.915);transform-origin:0 0">Spaces: 4</div>
<div class="a st" style="left:1557px;transform:scaleX(0.94);transform-origin:0 0">UTF-8</div>
<div class="a st" style="left:1628px;transform:scaleX(0.84);transform-origin:0 0">CRLF</div>
<div class="a st" style="left:1721px;transform:scaleX(0.92);transform-origin:0 0">C</div>
<div class="a st" style="left:1801px">Win32</div>
</body></html>
